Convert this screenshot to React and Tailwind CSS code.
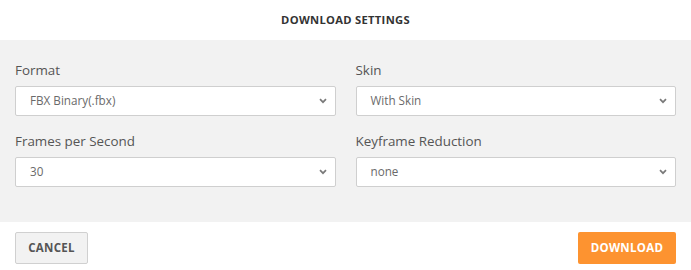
import React from "react";

function Chevron() {
  return (
    <svg width="8" height="6" viewBox="0 0 8 6" className="shrink-0">
      <path d="M1 1.2 L4 4.2 L7 1.2" fill="none" stroke="#7a7a7a" strokeWidth="1.7" />
    </svg>
  );
}

function Field({ label, value }) {
  return (
    <div className="flex flex-col">
      <div className="h-[20px] text-[13.4px] leading-[20px] text-[#555]">{label}</div>
      <div className="mt-[6px] h-[30px] bg-white border border-[#cfcfcf] rounded-[2px] flex items-center justify-between pl-[14px] pr-[8px]">
        <span className="text-[11.7px] text-[#6a6a6a]">{value}</span>
        <Chevron />
      </div>
    </div>
  );
}

export default function App() {
  return (
    <div className="w-[691px] h-[270px] bg-white flex flex-col" style={{ fontFamily: "'Open Sans', sans-serif" }}>
      <div className="h-[40px] flex items-center justify-center">
        <span className="text-[11.2px] font-bold tracking-[0.3px] text-[#333]">DOWNLOAD SETTINGS</span>
      </div>
      <div className="h-[182px] bg-[#f2f2f2] px-[15px] pt-[20px] grid grid-cols-2 gap-x-[20px] gap-y-[15px] content-start">
        <Field label="Format" value="FBX Binary(.fbx)" />
        <Field label="Skin" value="With Skin" />
        <Field label="Frames per Second" value="30" />
        <Field label="Keyframe Reduction" value="none" />
      </div>
      <div className="flex justify-between px-[15px] pt-[10px]">
        <button className="h-[32px] w-[73px] bg-[#f2f2f2] border border-[#d0d0d0] rounded-[2px] text-[11.5px] font-bold tracking-[0.3px] text-[#555]">CANCEL</button>
        <button className="h-[32px] w-[98px] bg-[#fd9330] rounded-[2px] text-[11.5px] font-bold tracking-[0.3px] text-white">DOWNLOAD</button>
      </div>
    </div>
  );
}
